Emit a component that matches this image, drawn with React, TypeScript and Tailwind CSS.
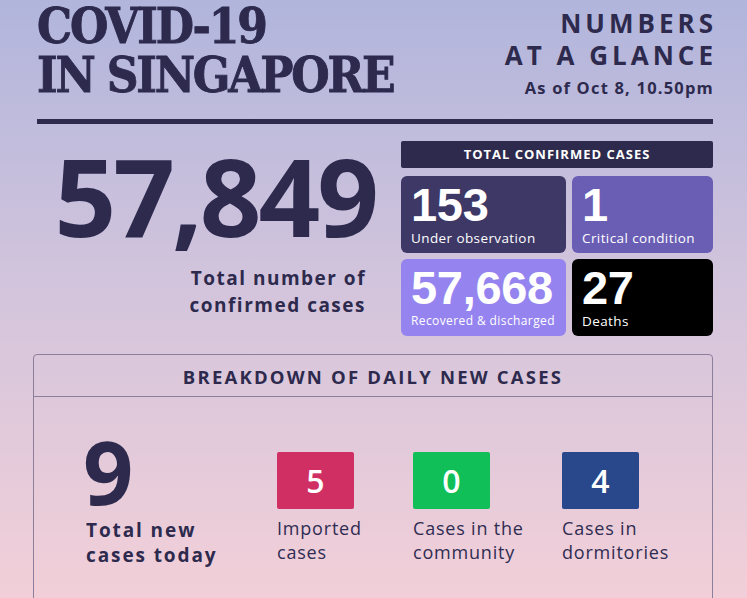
const ink = "text-[#2d2a4e]";

function StatCard({ value, label, bg, labelSize = "text-[13.5px]" }: { value: string; label: string; bg: string; labelSize?: string }) {
  return (
    <div className={`${bg} rounded-[6px] px-[10px] pt-[5px] text-white`}>
      <div className="text-[47px] font-bold leading-[48px] tracking-[-0.3px] [font-family:'Liberation_Sans',sans-serif]">{value}</div>
      <div className={`${labelSize} leading-[18px] font-medium tracking-[0.4px] [font-family:'Open_Sans',sans-serif]`}>{label}</div>
    </div>
  );
}

function NewCaseBox({ value, bg, line1, line2 }: { value: string; bg: string; line1: string; line2: string }) {
  return (
    <div className="flex flex-col">
      <div className={`${bg} w-[77px] h-[57px] rounded-[2px] flex items-center justify-center text-white text-[32px] font-semibold [font-family:'Open_Sans',sans-serif]`}>
        {value}
      </div>
      <div className="mt-[7px] text-[18px] leading-[24px] tracking-[0.8px] text-[#2f2c52] [font-family:'Open_Sans',sans-serif]">
        <div>{line1}</div>
        <div>{line2}</div>
      </div>
    </div>
  );
}

export default function App() {
  return (
    <div className="w-[747px] h-[598px] overflow-hidden bg-gradient-to-b from-[#b1b5dc] via-[#d4c5dc] to-[#f2cfd8]">
      {/* Header */}
      <div className="pl-[37px] pr-[34px] pt-[2px] flex justify-between">
        <h1 className={`${ink} text-[49px] leading-[49px] font-bold tracking-[-2.2px] [font-family:'DejaVu_Serif',serif] [font-stretch:condensed] [-webkit-text-stroke:0.8px_#2d2a4e]`}>
          COVID-19
          <br />
          IN SINGAPORE
        </h1>
        <div className={`${ink} text-right pt-[5px] [font-family:'Open_Sans',sans-serif]`}>
          <div className="text-[26px] leading-[32px] font-bold tracking-[4px] mr-[-4px]">NUMBERS</div>
          <div className="text-[26px] leading-[32px] font-bold tracking-[4px] mr-[-4px]">AT A GLANCE</div>
          <div className="mt-[7px] text-[16.5px] leading-[20px] font-bold tracking-[1.2px] mr-[-1px]">As of Oct 8, 10.50pm</div>
        </div>
      </div>
      <div className="ml-[37px] mr-[34px] mt-[19px] h-[5px] bg-[#2d2a4e]" />

      {/* Totals */}
      <div className="flex pl-[37px] pr-[34px] mt-[17px]">
        <div className="w-[364px] flex flex-col items-end pr-[25px]">
          <div className={`${ink} text-[108px] leading-[100px] font-bold tracking-[-3px] mt-[5px] [font-family:'Open_Sans',sans-serif]`}>
            57,849
          </div>
          <div className={`${ink} mr-[10px] mt-[19px] text-right text-[19px] leading-[27px] font-bold tracking-[1.5px] [font-family:'Open_Sans',sans-serif]`}>
            <div>Total number of</div>
            <div>confirmed cases</div>
          </div>
        </div>
        <div className="flex-1">
          <div className="h-[27px] bg-[#2d2a4e] rounded-[2px] flex items-center justify-center text-white text-[13px] font-bold tracking-[1px] [font-family:'Open_Sans',sans-serif]">
            TOTAL CONFIRMED CASES
          </div>
          <div className="mt-[8px] grid grid-cols-[165px_1fr] grid-rows-[77px_77px] gap-[6px]">
            <StatCard value="153" label="Under observation" bg="bg-[#3e3867]" />
            <StatCard value="1" label="Critical condition" bg="bg-[#6a5db4]" />
            <StatCard value="57,668" label="Recovered & discharged" bg="bg-[#9584ef]" labelSize="text-[12px]" />
            <StatCard value="27" label="Deaths" bg="bg-black" />
          </div>
        </div>
      </div>

      {/* Breakdown */}
      <div className="ml-[33px] mr-[34px] mt-[18px] border border-[#8c7f9c] rounded-[4px] h-[300px]">
        <div className={`h-[42px] border-b border-[#8c7f9c] flex items-center justify-center pt-[3px] ${ink} text-[18.5px] font-bold tracking-[2.2px] [font-family:'Open_Sans',sans-serif]`}>
          BREAKDOWN OF DAILY NEW CASES
        </div>
        <div className="flex pl-[49px] pt-[34px]">
          <div className="w-[194px]">
            <div className={`${ink} text-[88px] leading-[80px] font-bold [font-family:'Open_Sans',sans-serif]`}>9</div>
            <div className={`${ink} mt-[7px] ml-[3px] text-[19px] leading-[25px] font-bold tracking-[1.9px] [font-family:'Open_Sans',sans-serif]`}>
              <div>Total new</div>
              <div>cases today</div>
            </div>
          </div>
          <div className="flex pt-[21px]">
            <div className="w-[136px]">
              <NewCaseBox value="5" bg="bg-[#d02f64]" line1="Imported" line2="cases" />
            </div>
            <div className="w-[149px]">
              <NewCaseBox value="0" bg="bg-[#10bf57]" line1="Cases in the" line2="community" />
            </div>
            <NewCaseBox value="4" bg="bg-[#29488b]" line1="Cases in" line2="dormitories" />
          </div>
        </div>
      </div>
    </div>
  );
}
